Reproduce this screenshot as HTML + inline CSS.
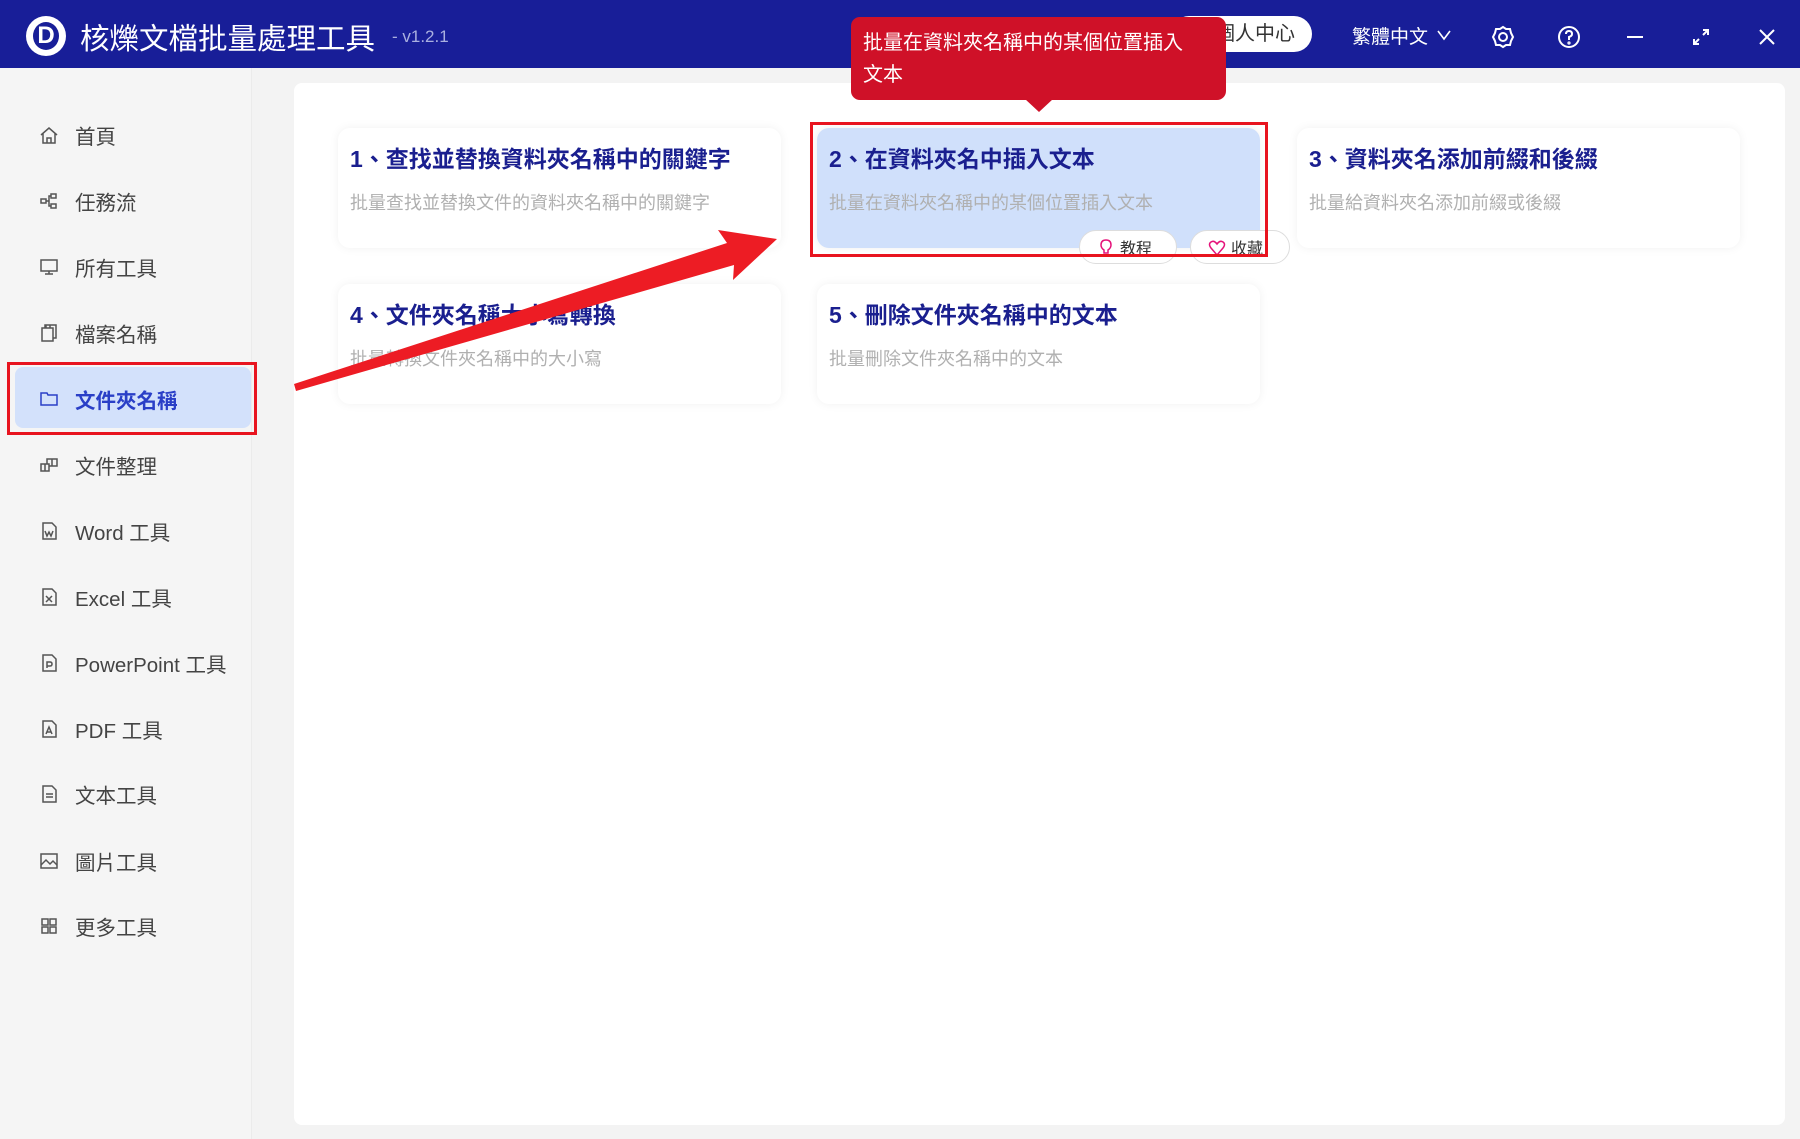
<!DOCTYPE html>
<html><head><meta charset="utf-8"><style>
*{margin:0;padding:0;box-sizing:border-box}
body{width:1800px;height:1139px;position:relative;overflow:hidden;background:#f3f3f3;font-family:"Liberation Sans","Noto Sans CJK TC",sans-serif}
.abs{position:absolute}
.tb{left:0;top:0;width:1800px;height:68px;background:#181e98}
.side{left:0;top:68px;width:252px;height:1071px;background:#f5f5f5;border-right:1px solid #ebebeb}
.item{position:absolute;left:0;width:252px;height:40px;display:flex;align-items:center;font-size:20.5px;color:#444}
.item svg{position:absolute;left:39px;width:20px;height:20px}
.item span{position:absolute;left:75px}
.main{left:294px;top:83px;width:1491px;height:1042px;background:#fff;border-radius:8px}
.card{position:absolute;width:443px;height:120px;background:#fff;border-radius:12px;box-shadow:0 0 10px rgba(0,0,0,0.06)}
.card h3{position:absolute;left:12px;top:12px;font-size:23px;font-weight:bold;color:#1a1f8f;white-space:nowrap}
.card p{position:absolute;left:12px;top:61px;font-size:18px;color:#b0b0b0;white-space:nowrap}
.btn{position:absolute;height:34px;border:1px solid #ddd;border-radius:17px;background:#fff;font-size:16px;color:#333;display:flex;align-items:center;padding-left:40px}
.ic{position:absolute;top:24px;width:26px;height:26px;stroke:#fff;fill:none;stroke-width:2}
</style></head><body>
<div class="abs tb"></div>
<div class="abs" style="left:26px;top:16px;width:40px;height:40px;border-radius:50%;background:#fff;"></div>
<div class="abs" style="left:33px;top:22px;width:26px;height:28px;border-radius:50%;background:#181e98;color:#fff;font-weight:bold;font-size:24px;line-height:28px;text-align:center">D</div>
<div class="abs" style="left:80px;top:16px;font-size:29.5px;color:#fff;">核爍文檔批量處理工具</div>
<div class="abs" style="left:392px;top:27px;font-size:17px;color:#aab0e0;">- v1.2.1</div>
<div class="abs" style="left:1171px;top:16px;width:141px;height:36px;border-radius:18px;background:#fff;font-size:20px;color:#333;line-height:36px;padding-left:44px">個人中心</div>
<div class="abs" style="left:1352px;top:22px;font-size:19px;color:#fff;">繁體中文</div>
<svg class="abs" style="left:1436px;top:28px" width="16" height="14" viewBox="0 0 16 14"><path d="M2 3 L8 11 L14 3" stroke="#fff" stroke-width="1.6" fill="none"/></svg>
<svg class="abs ic" style="left:1490px" viewBox="0 0 26 26"><circle cx="13" cy="13" r="4"/><path d="M13 3 L16 5 L20 5 L21 9 L23 13 L21 17 L20 21 L16 21 L13 23 L10 21 L6 21 L5 17 L3 13 L5 9 L6 5 L10 5 Z"/></svg>
<svg class="abs ic" style="left:1556px" viewBox="0 0 26 26"><circle cx="13" cy="13" r="10"/><path d="M10 10 Q10 7 13 7 Q16 7 16 10 Q16 12 13 13 L13 16"/><circle cx="13" cy="19" r="0.6"/></svg>
<svg class="abs ic" style="left:1622px" viewBox="0 0 26 26"><path d="M5 13 H21"/></svg>
<svg class="abs ic" style="left:1688px" viewBox="0 0 26 26"><path d="M15 6 H20 V11 M20 6 L15 11 M11 20 H6 V15 M6 20 L11 15"/></svg>
<svg class="abs ic" style="left:1754px" viewBox="0 0 26 26"><path d="M6 6 L20 20 M20 6 L6 20"/></svg>

<div class="abs side">
<div class="abs" style="left:15px;top:299px;width:236px;height:61px;background:#d3e1fb;border-radius:8px"></div>
<div class="abs" style="left:7px;top:294px;width:250px;height:73px;border:3px solid #e8141f"></div>
</div>
<div style="position:absolute;left:0;top:68px">
<div class="item" style="top:47px"><svg viewBox="0 0 20 20" fill="none" stroke="#555" stroke-width="1.5"><path d="M2 10 L10 3 L18 10 M4 8.5 V18 H16 V8.5 M8 18 V13 H12 V18"/></svg><span>首頁</span></div>
<div class="item" style="top:113px"><svg viewBox="0 0 20 20" fill="none" stroke="#555" stroke-width="1.5"><rect x="2" y="8" width="5" height="4"/><rect x="12" y="3" width="5" height="4"/><rect x="12" y="13" width="5" height="4"/><path d="M7 10 H10 V5 H12 M10 10 V15 H12"/></svg><span>任務流</span></div>
<div class="item" style="top:179px"><svg viewBox="0 0 20 20" fill="none" stroke="#555" stroke-width="1.5"><rect x="2" y="3" width="16" height="11"/><path d="M10 14 V17 M6 17 H14"/></svg><span>所有工具</span></div>
<div class="item" style="top:245px"><svg viewBox="0 0 20 20" fill="none" stroke="#555" stroke-width="1.5"><rect x="3" y="5" width="11" height="13"/><path d="M6 5 V2 H17 V15 H14 M7 2 V5 M11 2 V5"/></svg><span>檔案名稱</span></div>
<div class="item" style="top:311px;color:#2a3fc7;font-weight:bold"><svg viewBox="0 0 20 20" fill="none" stroke="#2a3fc7" stroke-width="1.5"><path d="M2 4 H8 L9 6 H18 V16 H2 Z"/></svg><span>文件夾名稱</span></div>
<div class="item" style="top:377px"><svg viewBox="0 0 20 20" fill="none" stroke="#555" stroke-width="1.5"><path d="M2 9 H10 V16 H2 Z M6 9 V16 M8 9 V4 H18 V11 H10 M13 4 V11"/></svg><span>文件整理</span></div>
<div class="item" style="top:443px"><svg viewBox="0 0 20 20" fill="none" stroke="#555" stroke-width="1.5"><path d="M4 2 H13 L17 6 V18 H4 Z M6 10 L8 15 L10 11 L12 15 L14 10"/></svg><span>Word 工具</span></div>
<div class="item" style="top:509px"><svg viewBox="0 0 20 20" fill="none" stroke="#555" stroke-width="1.5"><path d="M4 2 H13 L17 6 V18 H4 Z M7 9 L13 15 M13 9 L7 15"/></svg><span>Excel 工具</span></div>
<div class="item" style="top:575px"><svg viewBox="0 0 20 20" fill="none" stroke="#555" stroke-width="1.5"><path d="M4 2 H13 L17 6 V18 H4 Z M8 15 V9 H11 Q13 9 13 11 Q13 13 11 13 H8"/></svg><span>PowerPoint 工具</span></div>
<div class="item" style="top:641px"><svg viewBox="0 0 20 20" fill="none" stroke="#555" stroke-width="1.5"><path d="M4 2 H13 L17 6 V18 H4 Z M7 15 L10 8 L13 15 M8 13 H12"/></svg><span>PDF 工具</span></div>
<div class="item" style="top:706px"><svg viewBox="0 0 20 20" fill="none" stroke="#555" stroke-width="1.5"><path d="M4 2 H13 L17 6 V18 H4 Z M7 10 H14 M7 13 H14"/></svg><span>文本工具</span></div>
<div class="item" style="top:773px"><svg viewBox="0 0 20 20" fill="none" stroke="#555" stroke-width="1.5"><rect x="2" y="3" width="16" height="14"/><path d="M2 14 L7 9 L11 13 L14 10 L18 14"/></svg><span>圖片工具</span></div>
<div class="item" style="top:838px"><svg viewBox="0 0 20 20" fill="none" stroke="#555" stroke-width="1.5"><rect x="3" y="3" width="6" height="6"/><rect x="11" y="3" width="6" height="6"/><rect x="3" y="11" width="6" height="6"/><rect x="11" y="11" width="6" height="6"/></svg><span>更多工具</span></div>
</div>

<div class="abs main"></div>
<div class="card" style="left:338px;top:128px"><h3>1、查找並替換資料夾名稱中的關鍵字</h3><p>批量查找並替換文件的資料夾名稱中的關鍵字</p></div>
<div class="card" style="left:817px;top:128px;background:#d0e0fb"><h3>2、在資料夾名中插入文本</h3><p>批量在資料夾名稱中的某個位置插入文本</p></div>
<div class="card" style="left:1297px;top:128px"><h3>3、資料夾名添加前綴和後綴</h3><p>批量給資料夾名添加前綴或後綴</p></div>
<div class="card" style="left:338px;top:284px"><h3>4、文件夾名稱大小寫轉換</h3><p>批量轉換文件夾名稱中的大小寫</p></div>
<div class="card" style="left:817px;top:284px"><h3>5、刪除文件夾名稱中的文本</h3><p>批量刪除文件夾名稱中的文本</p></div>

<div class="btn" style="left:1079px;top:230px;width:98px">教程</div>
<svg class="abs" style="left:1097px;top:238px" width="18" height="18" viewBox="0 0 18 18" fill="none" stroke="#e5137a" stroke-width="1.5"><path d="M9 2 Q14 2 14 7 Q14 10 11 12 V15 H7 V12 Q4 10 4 7 Q4 2 9 2 Z"/></svg>
<div class="btn" style="left:1190px;top:230px;width:100px">收藏</div>
<svg class="abs" style="left:1208px;top:239px" width="18" height="18" viewBox="0 0 18 18" fill="none" stroke="#e5137a" stroke-width="1.5"><path d="M9 16 L3 9 Q0 5 3 3 Q6 1 9 5 Q12 1 15 3 Q18 5 15 9 Z"/></svg>
<div class="abs" style="left:810px;top:122px;width:458px;height:135px;border:3px solid #e8141f"></div>

<div class="abs" style="left:851px;top:17px;width:375px;height:83px;background:#cf1128;border-radius:9px;color:#fff;font-size:20px;line-height:32px;padding:10px 12px">批量在資料夾名稱中的某個位置插入<br>文本</div>
<svg class="abs" style="left:1025px;top:99px" width="28" height="14"><path d="M0 0 H28 L14 13 Z" fill="#cf1128"/></svg>

<svg class="abs" style="left:0;top:0" width="1800" height="1139"><polygon points="294,384 727,243 718,230 777,239 733,280 734,265 296,391" fill="#ed1c24"/></svg>
</body></html>
